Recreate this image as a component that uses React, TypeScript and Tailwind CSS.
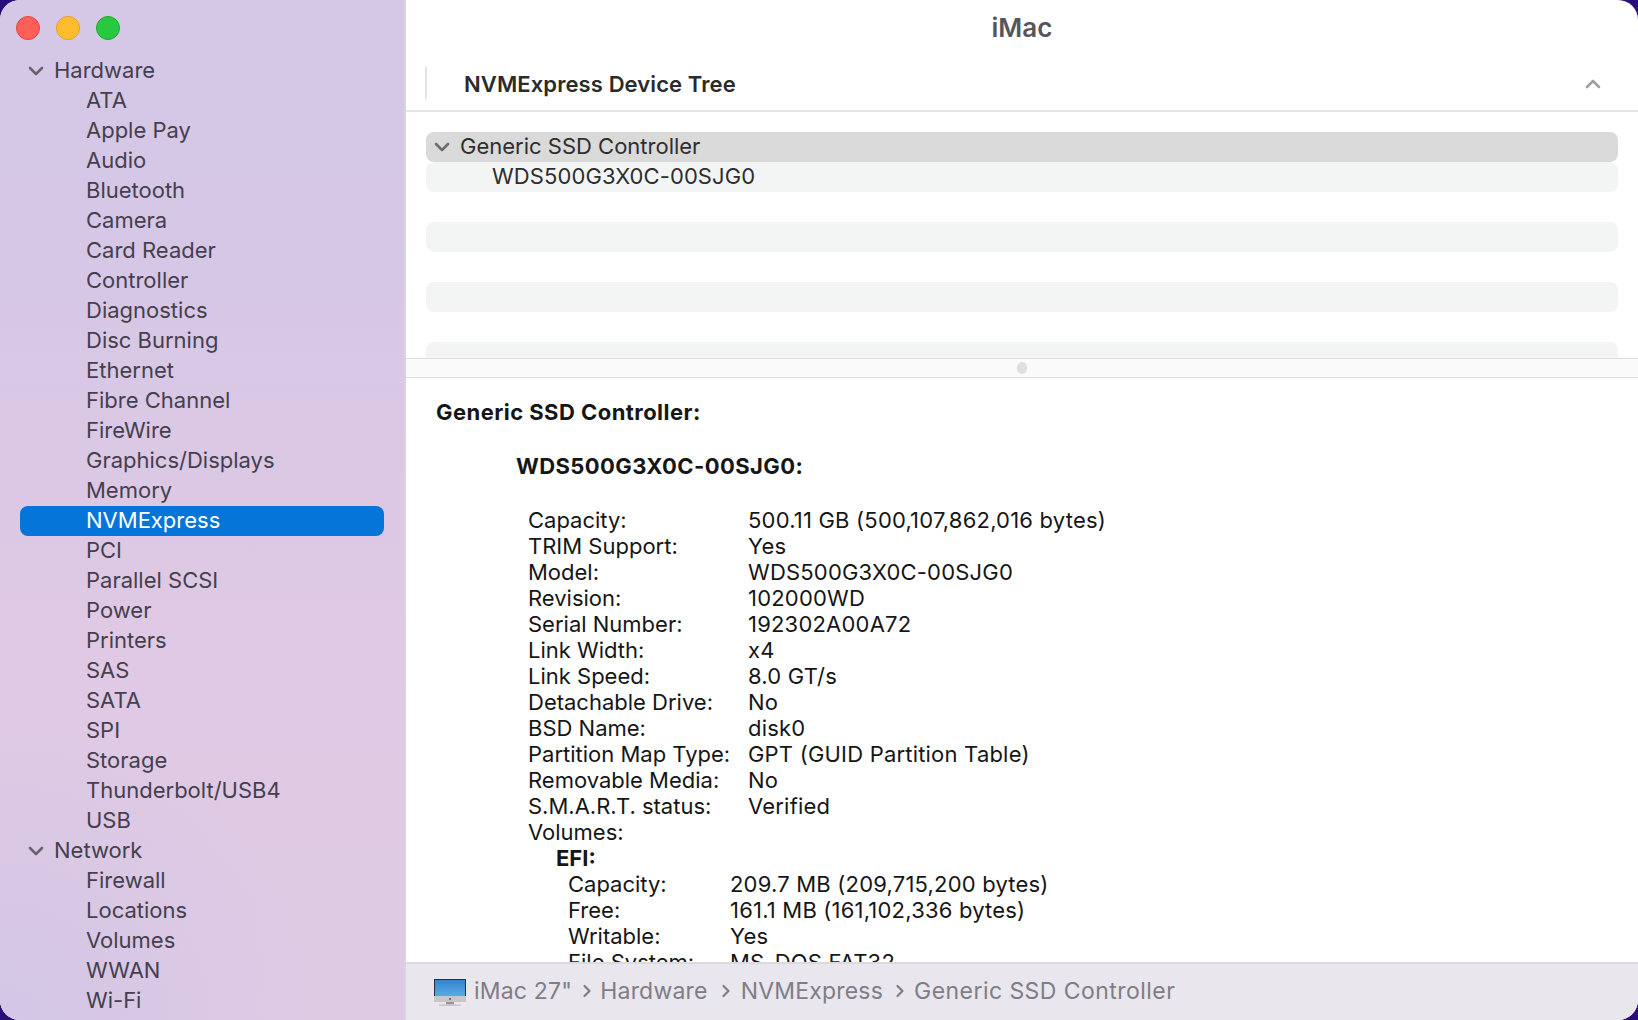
import { ChevronRight } from "lucide-react"

const hardware = [
  "ATA", "Apple Pay", "Audio", "Bluetooth", "Camera", "Card Reader", "Controller", "Diagnostics",
  "Disc Burning", "Ethernet", "Fibre Channel", "FireWire", "Graphics/Displays", "Memory", "NVMExpress",
  "PCI", "Parallel SCSI", "Power", "Printers", "SAS", "SATA", "SPI", "Storage", "Thunderbolt/USB4", "USB",
]
const network = ["Firewall", "Locations", "Volumes", "WWAN", "Wi-Fi"]

const details = [
  ["Capacity:", "500.11 GB (500,107,862,016 bytes)"],
  ["TRIM Support:", "Yes"],
  ["Model:", "WDS500G3X0C-00SJG0"],
  ["Revision:", "102000WD"],
  ["Serial Number:", "192302A00A72"],
  ["Link Width:", "x4"],
  ["Link Speed:", "8.0 GT/s"],
  ["Detachable Drive:", "No"],
  ["BSD Name:", "disk0"],
  ["Partition Map Type:", "GPT (GUID Partition Table)"],
  ["Removable Media:", "No"],
  ["S.M.A.R.T. status:", "Verified"],
  ["Volumes:", ""],
]
const efi = [
  ["Capacity:", "209.7 MB (209,715,200 bytes)"],
  ["Free:", "161.1 MB (161,102,336 bytes)"],
  ["Writable:", "Yes"],
  ["File System:", "MS-DOS FAT32"],
]

const crumbs = [
  { title: "Hardware", gap: "ml-[5px] mr-[3px]", text: "" },
  { title: "NVMExpress", gap: "ml-[8px] mr-[5px]", text: "" },
  { title: "Generic SSD Controller", gap: "ml-[7px] mr-[4px]", text: "tracking-[0.45px]" },
]

const Chevron = ({ up, color }: { up?: boolean; color: string }) => (
  <svg width="16" height="10" viewBox="0 0 16 10" fill="none" className={up ? "shrink-0 translate-y-[1px] rotate-180" : "shrink-0 translate-y-[1px]"}>
    <path d="M2 2 L8 8 L14 2" stroke={color} strokeWidth="2.6" strokeLinecap="round" strokeLinejoin="round" />
  </svg>
)

const GroupRow = ({ title }: { title: string }) => (
  <div className="h-[30px] flex items-center pl-[8px] pb-[2px] gap-[10px] text-[#45404d]">
    <Chevron color="#67626f" />
    <span>{title}</span>
  </div>
)

const SideRow = ({ title }: { title: string }) => (
  <div
    className={
      title === "NVMExpress"
        ? "h-[30px] flex items-center pl-[66px] pb-[2px] rounded-[8px] bg-[#0675d9] text-white"
        : "h-[30px] flex items-center pl-[66px] pb-[2px] text-[#45404d]"
    }
  >
    {title}
  </div>
)

const ImacIcon = () => (
  <svg width="32" height="27" viewBox="0 0 32 27" className="shrink-0">
    <defs>
      <linearGradient id="screen" x1="0" y1="0" x2="0" y2="1">
        <stop offset="0" stopColor="#3583cd" />
        <stop offset="1" stopColor="#55abe6" />
      </linearGradient>
    </defs>
    <rect x="0" y="0" width="32" height="17" fill="#2c3138" />
    <rect x="1" y="1" width="30" height="16" fill="url(#screen)" />
    <rect x="0" y="17" width="32" height="6" fill="#c7c7ca" />
    <circle cx="16" cy="20" r="1" fill="#55565a" />
    <rect x="12" y="23" width="8" height="2.5" fill="#96969a" />
    <rect x="5" y="25.5" width="22" height="1.5" fill="#c9c7ce" />
  </svg>
)

export default function App() {
  return (
    <div className="w-[1638px] h-[1020px] bg-[#2a0f7a] overflow-hidden font-['Inter',sans-serif]">
      <div className="w-full h-full rounded-[20px] overflow-hidden flex bg-white">
        <aside className="w-[406px] shrink-0 border-r-2 border-[#d9d5de] bg-[radial-gradient(ellipse_320px_300px_at_0%_100%,#d3c6e6_0%,transparent_100%),linear-gradient(to_bottom,#d5c7e6_0%,#d6c7e6_25%,#dfc9e4_62%,#dfcae4_100%)] text-[22px] overflow-hidden">
          <div className="flex items-start gap-[16px] pt-[16px] pl-[16px] h-[56px]">
            <span className="w-[24px] h-[24px] rounded-full bg-[#ff5f57] border border-[#e0443e]" />
            <span className="w-[24px] h-[24px] rounded-full bg-[#ffbd2e] border border-[#dea123]" />
            <span className="w-[24px] h-[24px] rounded-full bg-[#28c840] border border-[#1aab29]" />
          </div>
          <div className="pl-[20px] pr-[20px]">
            <GroupRow title="Hardware" />
            {hardware.map((item) => (
              <SideRow key={item} title={item} />
            ))}
            <GroupRow title="Network" />
            {network.map((item) => (
              <SideRow key={item} title={item} />
            ))}
          </div>
        </aside>

        <main className="flex-1 min-w-0 flex flex-col">
          <div className="h-[55px] shrink-0 flex items-center justify-center text-[26px] font-semibold text-[#55555a]">iMac</div>
          <div className="h-[57px] shrink-0 flex items-center border-b-2 border-[#e4e4e4] pl-[19px] pr-[37px]">
            <span className="w-[2px] h-[32px] bg-[#e4e4e4]" />
            <span className="ml-[37px] pt-[4px] text-[22px] font-semibold tracking-[0.1px] text-[#2b2b2b]">NVMExpress Device Tree</span>
            <span className="ml-auto">
              <Chevron up color="#a0a0a0" />
            </span>
          </div>

          <div className="h-[246px] shrink-0 overflow-hidden pt-[20px] px-[20px] text-[22px] text-[#2e2e2e]">
            <div className="h-[30px] flex items-center gap-[10px] pl-[8px] pb-[2px] rounded-[8px] bg-[#dadada]">
              <Chevron color="#6e6e6e" />
              <span>Generic SSD Controller</span>
            </div>
            <div className="h-[30px] flex items-center pl-[66px] pb-[2px] rounded-[8px] bg-[#f3f5f4] tracking-[0.1px]">WDS500G3X0C-00SJG0</div>
            <div className="h-[30px] mt-[30px] rounded-[8px] bg-[#f3f5f4]" />
            <div className="h-[30px] mt-[30px] rounded-[8px] bg-[#f3f5f4]" />
            <div className="h-[30px] mt-[30px] rounded-[8px] bg-[#f3f5f4]" />
          </div>

          <div className="h-[20px] shrink-0 flex items-center justify-center bg-[#fafafa] border-y border-[#dedede]">
            <span className="w-[10px] h-[12px] rounded-full bg-[#e0e0e0]" />
          </div>

          <div className="flex-1 min-h-0 overflow-hidden text-[22px] leading-[26px] text-[#161616] pt-[21px] pl-[30px]">
            <div className="font-bold tracking-[0.45px]">Generic SSD Controller:</div>
            <div className="font-bold tracking-[0.4px] ml-[80px] mt-[28px]">WDS500G3X0C-00SJG0:</div>
            <div className="ml-[92px] mt-[28px]">
              {details.map(([label, value]) => (
                <div key={label} className="flex h-[26px]">
                  <span className="w-[220px] shrink-0">{label}</span>
                  <span className="tracking-[0.2px]">{value}</span>
                </div>
              ))}
              <div className="font-bold ml-[28px]">EFI:</div>
              <div className="ml-[40px]">
                {efi.map(([label, value]) => (
                  <div key={label} className="flex h-[26px]">
                    <span className="w-[162px] shrink-0">{label}</span>
                    <span className="tracking-[0.2px]">{value}</span>
                  </div>
                ))}
              </div>
            </div>
          </div>

          <footer className="h-[58px] shrink-0 flex items-center pl-[28px] bg-[#e9e6ee] border-t-2 border-[#dcd9e0] text-[23px] tracking-[0.2px] text-[#807d85]">
            <ImacIcon />
            <span className="ml-[8px] pb-[2px]">iMac 27"</span>
            {crumbs.map((c) => (
              <span key={c.title} className="flex items-center pb-[2px]">
                <ChevronRight size={20} strokeWidth={2.6} className={c.gap} />
                <span className={c.text}>{c.title}</span>
              </span>
            ))}
          </footer>
        </main>
      </div>
    </div>
  )
}
